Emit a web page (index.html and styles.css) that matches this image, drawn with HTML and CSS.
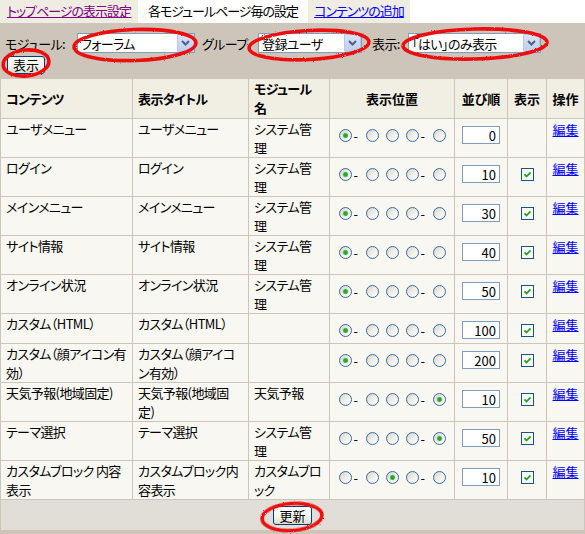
FILE: index.html
```html
<!DOCTYPE html>
<html lang="ja">
<head>
<meta charset="utf-8">
<title>ブロック管理</title>
<link rel="stylesheet" href="styles.css">
</head>
<body>
<div class="page">
  <nav class="tabs">
    <a class="tab tab-top" href="#">トップページの表示設定</a>
    <span class="tab tab-current">各モジュールページ毎の設定</span>
    <a class="tab tab-add" href="#">コンテンツの追加</a>
  </nav>
  <div class="panel">
    <form class="filter">
      <div class="filter-row">
        <label class="lbl lbl-module">モジュール:</label>
        <span class="sel sel-module"><select><option>フォーラム</option></select><span class="sel-btn"><svg width="9" height="6" viewBox="0 0 9 6"><path d="M1 1l3.5 3.5L8 1" fill="none" stroke="#4d6185" stroke-width="2"/></svg></span></span>
        <label class="lbl lbl-group">グループ</label>
        <span class="sel sel-group"><select><option>登録ユーザ</option></select><span class="sel-btn"><svg width="9" height="6" viewBox="0 0 9 6"><path d="M1 1l3.5 3.5L8 1" fill="none" stroke="#4d6185" stroke-width="2"/></svg></span></span>
        <label class="lbl lbl-show">表示:</label>
        <span class="sel sel-show"><select><option>「はい」のみ表示</option></select><span class="sel-btn"><svg width="9" height="6" viewBox="0 0 9 6"><path d="M1 1l3.5 3.5L8 1" fill="none" stroke="#4d6185" stroke-width="2"/></svg></span></span>
      </div>
      <div class="filter-actions"><button type="button" class="btn">表示</button></div>
    </form>
    <table class="blocks">
      <colgroup>
        <col class="c1"><col class="c2"><col class="c3"><col class="c4"><col class="c5"><col class="c6"><col class="c7">
      </colgroup>
      <thead>
        <tr><th>コンテンツ</th><th>表示タイトル</th><th>モジュール<br>名</th><th class="c">表示位置</th><th class="c">並び順</th><th class="c">表示</th><th class="c">操作</th></tr>
      </thead>
      <tbody>
        <tr><td>ユーザメニュー</td><td>ユーザメニュー</td><td>システム管<br>理</td>
          <td class="pos"><div class="radios"><input type="radio" name="p1" checked><span class="dash">-</span><input type="radio" name="p1"><input type="radio" name="p1"><input type="radio" name="p1"><span class="dash">-</span><input type="radio" name="p1"></div></td>
          <td class="ord"><input class="num" type="text" value="0"></td><td class="vis"></td><td class="op"><a href="#">編集</a></td></tr>
        <tr><td>ログイン</td><td>ログイン</td><td>システム管<br>理</td>
          <td class="pos"><div class="radios"><input type="radio" name="p2" checked><span class="dash">-</span><input type="radio" name="p2"><input type="radio" name="p2"><input type="radio" name="p2"><span class="dash">-</span><input type="radio" name="p2"></div></td>
          <td class="ord"><input class="num" type="text" value="10"></td><td class="vis"><span class="chk"><svg width="13" height="13" viewBox="0 0 13 13"><rect x="0.5" y="0.5" width="12" height="12" fill="#fbfbf9" stroke="#1c5180"/><path d="M3.5 6.3l2 2.2 4-4.2" fill="none" stroke="#21a121" stroke-width="1.8"/></svg></span></td><td class="op"><a href="#">編集</a></td></tr>
        <tr><td>メインメニュー</td><td>メインメニュー</td><td>システム管<br>理</td>
          <td class="pos"><div class="radios"><input type="radio" name="p3" checked><span class="dash">-</span><input type="radio" name="p3"><input type="radio" name="p3"><input type="radio" name="p3"><span class="dash">-</span><input type="radio" name="p3"></div></td>
          <td class="ord"><input class="num" type="text" value="30"></td><td class="vis"><span class="chk"><svg width="13" height="13" viewBox="0 0 13 13"><rect x="0.5" y="0.5" width="12" height="12" fill="#fbfbf9" stroke="#1c5180"/><path d="M3.5 6.3l2 2.2 4-4.2" fill="none" stroke="#21a121" stroke-width="1.8"/></svg></span></td><td class="op"><a href="#">編集</a></td></tr>
        <tr><td>サイト情報</td><td>サイト情報</td><td>システム管<br>理</td>
          <td class="pos"><div class="radios"><input type="radio" name="p4" checked><span class="dash">-</span><input type="radio" name="p4"><input type="radio" name="p4"><input type="radio" name="p4"><span class="dash">-</span><input type="radio" name="p4"></div></td>
          <td class="ord"><input class="num" type="text" value="40"></td><td class="vis"><span class="chk"><svg width="13" height="13" viewBox="0 0 13 13"><rect x="0.5" y="0.5" width="12" height="12" fill="#fbfbf9" stroke="#1c5180"/><path d="M3.5 6.3l2 2.2 4-4.2" fill="none" stroke="#21a121" stroke-width="1.8"/></svg></span></td><td class="op"><a href="#">編集</a></td></tr>
        <tr><td>オンライン状況</td><td>オンライン状況</td><td>システム管<br>理</td>
          <td class="pos"><div class="radios"><input type="radio" name="p5" checked><span class="dash">-</span><input type="radio" name="p5"><input type="radio" name="p5"><input type="radio" name="p5"><span class="dash">-</span><input type="radio" name="p5"></div></td>
          <td class="ord"><input class="num" type="text" value="50"></td><td class="vis"><span class="chk"><svg width="13" height="13" viewBox="0 0 13 13"><rect x="0.5" y="0.5" width="12" height="12" fill="#fbfbf9" stroke="#1c5180"/><path d="M3.5 6.3l2 2.2 4-4.2" fill="none" stroke="#21a121" stroke-width="1.8"/></svg></span></td><td class="op"><a href="#">編集</a></td></tr>
        <tr><td>カスタム（HTML）</td><td>カスタム（HTML）</td><td></td>
          <td class="pos"><div class="radios"><input type="radio" name="p6" checked><span class="dash">-</span><input type="radio" name="p6"><input type="radio" name="p6"><input type="radio" name="p6"><span class="dash">-</span><input type="radio" name="p6"></div></td>
          <td class="ord"><input class="num" type="text" value="100"></td><td class="vis"><span class="chk"><svg width="13" height="13" viewBox="0 0 13 13"><rect x="0.5" y="0.5" width="12" height="12" fill="#fbfbf9" stroke="#1c5180"/><path d="M3.5 6.3l2 2.2 4-4.2" fill="none" stroke="#21a121" stroke-width="1.8"/></svg></span></td><td class="op"><a href="#">編集</a></td></tr>
        <tr><td>カスタム（顔アイコン有効）</td><td>カスタム（顔アイコン有効）</td><td></td>
          <td class="pos"><div class="radios"><input type="radio" name="p7" checked><span class="dash">-</span><input type="radio" name="p7"><input type="radio" name="p7"><input type="radio" name="p7"><span class="dash">-</span><input type="radio" name="p7"></div></td>
          <td class="ord"><input class="num" type="text" value="200"></td><td class="vis"><span class="chk"><svg width="13" height="13" viewBox="0 0 13 13"><rect x="0.5" y="0.5" width="12" height="12" fill="#fbfbf9" stroke="#1c5180"/><path d="M3.5 6.3l2 2.2 4-4.2" fill="none" stroke="#21a121" stroke-width="1.8"/></svg></span></td><td class="op"><a href="#">編集</a></td></tr>
        <tr><td>天気予報(地域固定)</td><td>天気予報(地域固定)</td><td>天気予報</td>
          <td class="pos"><div class="radios"><input type="radio" name="p8"><span class="dash">-</span><input type="radio" name="p8"><input type="radio" name="p8"><input type="radio" name="p8"><span class="dash">-</span><input type="radio" name="p8" checked></div></td>
          <td class="ord"><input class="num" type="text" value="10"></td><td class="vis"><span class="chk"><svg width="13" height="13" viewBox="0 0 13 13"><rect x="0.5" y="0.5" width="12" height="12" fill="#fbfbf9" stroke="#1c5180"/><path d="M3.5 6.3l2 2.2 4-4.2" fill="none" stroke="#21a121" stroke-width="1.8"/></svg></span></td><td class="op"><a href="#">編集</a></td></tr>
        <tr><td>テーマ選択</td><td>テーマ選択</td><td>システム管<br>理</td>
          <td class="pos"><div class="radios"><input type="radio" name="p9"><span class="dash">-</span><input type="radio" name="p9"><input type="radio" name="p9"><input type="radio" name="p9"><span class="dash">-</span><input type="radio" name="p9" checked></div></td>
          <td class="ord"><input class="num" type="text" value="50"></td><td class="vis"><span class="chk"><svg width="13" height="13" viewBox="0 0 13 13"><rect x="0.5" y="0.5" width="12" height="12" fill="#fbfbf9" stroke="#1c5180"/><path d="M3.5 6.3l2 2.2 4-4.2" fill="none" stroke="#21a121" stroke-width="1.8"/></svg></span></td><td class="op"><a href="#">編集</a></td></tr>
        <tr><td>カスタムブロック 内容表示</td><td>カスタムブロック内容表示</td><td>カスタムブロック</td>
          <td class="pos"><div class="radios"><input type="radio" name="p10"><span class="dash">-</span><input type="radio" name="p10"><input type="radio" name="p10" checked><input type="radio" name="p10"><span class="dash">-</span><input type="radio" name="p10"></div></td>
          <td class="ord"><input class="num" type="text" value="10"></td><td class="vis"><span class="chk"><svg width="13" height="13" viewBox="0 0 13 13"><rect x="0.5" y="0.5" width="12" height="12" fill="#fbfbf9" stroke="#1c5180"/><path d="M3.5 6.3l2 2.2 4-4.2" fill="none" stroke="#21a121" stroke-width="1.8"/></svg></span></td><td class="op"><a href="#">編集</a></td></tr>
      </tbody>
      <tfoot>
        <tr><td colspan="7" class="foot"><button type="button" class="btn">更新</button></td></tr>
      </tfoot>
    </table>
  </div>
  <svg class="marks" width="585" height="534" viewBox="0 0 585 534" aria-hidden="true">
    <defs>
      <filter id="rough" x="-10%" y="-30%" width="120%" height="160%">
        <feTurbulence type="fractalNoise" baseFrequency="0.9" numOctaves="2" seed="3" result="n"/>
        <feDisplacementMap in="SourceGraphic" in2="n" scale="2.2"/>
      </filter>
    </defs>
    <g fill="none" stroke="#ee1111" stroke-width="3.6" filter="url(#rough)">
      <ellipse cx="135" cy="45" rx="61" ry="15.5" transform="rotate(-2 135 45)"/>
      <ellipse cx="309" cy="45" rx="60" ry="14.5" transform="rotate(-3 309 45)"/>
      <ellipse cx="475" cy="44" rx="72" ry="15" transform="rotate(-1.5 475 44)"/>
      <ellipse cx="26" cy="63" rx="23" ry="13" transform="rotate(-6 26 63)"/>
      <ellipse cx="292" cy="517" rx="30" ry="13.5" transform="rotate(-4 292 517)"/>
    </g>
  </svg>
</div>
</body>
</html>
```
FILE: styles.css
```css
* { box-sizing: border-box; }
html, body { margin: 0; padding: 0; background: #fff; }
body {
  font-family: "Noto Sans CJK JP", "Noto Sans CJK SC", sans-serif;
  font-size: 13px;
  color: #000;
  font-feature-settings: "palt";
  letter-spacing: -0.6px;
}
.page { position: relative; width: 585px; height: 534px; overflow: hidden; }

/* tabs */
.tabs { display: flex; height: 23px; background: #fff; }
.tab { display: block; height: 23px; line-height: 22px; text-align: center; white-space: nowrap; letter-spacing: -1px; }
.tab-top { width: 138px; background: #efece2; color: #800080; text-decoration: underline; }
.tab-current { width: 170px; background: #fff; color: #000; }
.tab-add { width: 102px; background: #efece2; color: #0000ff; text-decoration: underline; }

/* panel */
.panel { background: #cec5ba; padding-top: 10px; height: 511px; }
.filter { margin: 0; }
.filter-row { display: flex; align-items: center; height: 20px; padding-left: 5px; }
.lbl { white-space: nowrap; }
.lbl-module { width: 72px; }
.lbl-group { width: 56px; margin-left: 7px; }
.lbl-show { width: 36px; margin-left: 10px; }
.sel { display: flex; height: 20px; border: 1px solid #7f9db9; background: #fff; }
.sel-module { width: 118px; }
.sel-group { width: 104px; }
.sel-show { width: 133px; }
.sel select {
  -webkit-appearance: none; appearance: none;
  flex: 1; min-width: 0; height: 18px;
  border: 0; outline: none; background: #fff;
  font: inherit; letter-spacing: inherit; color: #000; padding: 0 0 0 3px; margin: 0;
}
.sel-btn {
  width: 17px; height: 18px; flex: none;
  display: flex; align-items: center; justify-content: center;
  background: linear-gradient(#dae3f8, #c0cdec);
  border: 1px solid #b7c6ea;
  border-radius: 1px;
}
.filter-actions { padding: 2px 0 5px 7px; height: 25px; }
.btn {
  height: 18px; padding: 0 5px; margin: 0;
  font: inherit; font-size: 13px; line-height: 16px; color: #000; letter-spacing: 0;
  border: 1px solid #003c74; border-radius: 3px;
  background: linear-gradient(#ffffff, #f5f4ef 55%, #dcdad2);
}

/* table */
.blocks {
  width: 585px; table-layout: fixed;
  border-collapse: separate; border-spacing: 1px;
  background: #cec5ba;
}
.c1 { width: 131px; } .c2 { width: 115px; } .c3 { width: 80px; } .c4 { width: 124px; }
.c5 { width: 52px; } .c6 { width: 38px; } .c7 { width: 37px; }
.blocks th {
  background: #f1eee4; font-weight: bold; text-align: left; vertical-align: middle;
  padding: 0 5px 1px; line-height: 19px;
}
.blocks th.c { text-align: center; padding-left: 2px; padding-right: 2px; letter-spacing: 0; }
.blocks td {
  background: #f8f7f1; vertical-align: top;
  padding: 0 5px; line-height: 19px;
}
.blocks td.pos, .blocks td.ord, .blocks td.vis, .blocks td.op { text-align: center; padding-left: 2px; padding-right: 2px; }
.blocks td.op { padding-top: 1px; }
.radios { display: flex; justify-content: center; align-items: center; height: 18px; margin: 7px 0 4px; }
.radios input {
  -webkit-appearance: none; appearance: none;
  width: 13px; height: 13px; margin: 0; flex: none;
  border-radius: 50%; border: 1px solid #3a6a9a;
  background: linear-gradient(135deg, #d6d4cc 0%, #efeee9 50%, #ffffff 100%);
}
.radios input:checked {
  background: radial-gradient(circle at 50% 50%, #2ea52e 0, #2ea52e 1.8px, #8fd88f 2.6px, rgba(255,255,255,0) 3.2px),
              linear-gradient(135deg, #d6d4cc 0%, #efeee9 50%, #ffffff 100%);
}
.radios input + input { margin-left: 7px; }
.dash { width: 4px; margin: 0 8px 0 2px; line-height: 1; text-align: center; letter-spacing: 0; }
.num {
  width: 38px; height: 18px; margin: 7px 0 4px; vertical-align: top;
  border: 1px solid #7f9db9; background: #fff;
  font: inherit; font-size: 13px; line-height: 16px; letter-spacing: 0; text-align: right; padding: 0 3px 0 0;
}
.chk { display: flex; justify-content: center; align-items: center; height: 18px; margin: 7px 0 4px; }
.chk svg { display: block; }
.op a { color: #0000ff; text-decoration: underline; letter-spacing: 0; }
.blocks td.foot { background: #e1ddd7; text-align: center; padding: 6px 0 5px; line-height: 19px; }
.foot .btn { height: 19px; vertical-align: top; }

/* annotation marks */
.marks { position: absolute; left: 0; top: 0; pointer-events: none; }
```
